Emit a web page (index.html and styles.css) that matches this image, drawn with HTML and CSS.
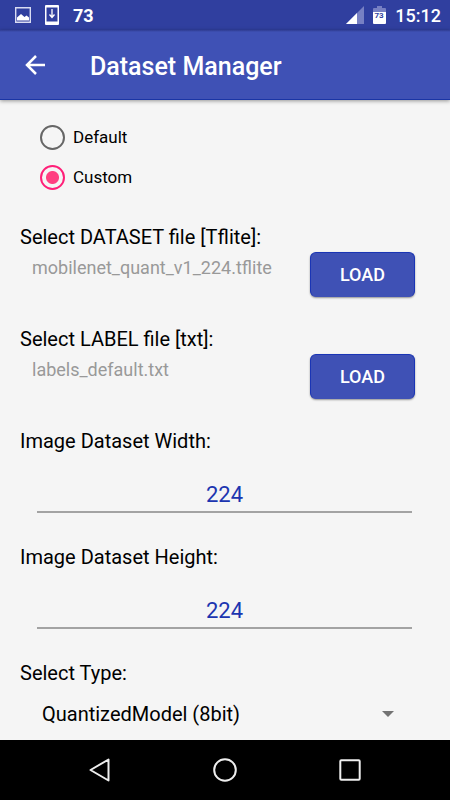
FILE: index.html
```html
<!DOCTYPE html>
<html lang="en">
<head>
<meta charset="utf-8">
<meta name="viewport" content="width=device-width, initial-scale=1">
<title>Dataset Manager</title>
<link rel="stylesheet" href="styles.css">
</head>
<body>
<div class="status">
  <div class="status-left">
    <svg width="16" height="16" viewBox="0 0 16 16" aria-hidden="true"><path d="M.7.7h14.6v14.6H.7z" fill="none" stroke="#d9dcf2" stroke-width="1.4"/><path d="M2 13.500V10.500l4-3.500 3.500 3 2-1.500L14 10.500v3z" fill="#fff"/></svg>
    <svg width="14" height="20" viewBox="0 0 14 20" aria-hidden="true"><path fill="#fff" fill-rule="evenodd" d="M1 0h12a1 1 0 0 1 1 1v18a1 1 0 0 1-1 1H1a1 1 0 0 1-1-1V1a1 1 0 0 1 1-1zM1.500 2.500v14h11v-14z"/><path d="M7 4v8M4.500 9.500 7 12.500l2.500-3" fill="none" stroke="#fff" stroke-width="1.300"/></svg>
    <span class="status-count">73</span>
  </div>
  <div class="status-right">
    <svg width="18" height="18" viewBox="0 0 18 18" aria-hidden="true"><path d="M18 0v18H0z" fill="#7780c3"/><path d="M11 7v11H0z" fill="#fff"/></svg>
    <svg width="13" height="18" viewBox="0 0 13 18" aria-hidden="true"><path d="M4 0h5v2h3a1 1 0 0 1 1 1v3H0V3a1 1 0 0 1 1-1h3z" fill="#7780c3"/><path d="M0 6h13v11a1 1 0 0 1-1 1H1a1 1 0 0 1-1-1z" fill="#fff"/><text x="6" y="12" class="battery-text">73</text></svg>
    <span class="clock">15:12</span>
  </div>
</div>
<header class="appbar">
  <button class="back" type="button" aria-label="Back"><svg width="20" height="20" viewBox="0 0 20 20"><path d="M20 10H2M11 1 2 10l9 9" fill="none" stroke="#fff" stroke-width="2.500"/></svg></button>
  <h1>Dataset Manager</h1>
</header>
<main>
  <div class="choices">
    <label class="choice"><input type="radio" name="source">Default</label>
    <label class="choice"><input type="radio" name="source" checked>Custom</label>
  </div>
  <section class="file">
    <h2>Select DATASET file [Tflite]:</h2>
    <div class="file-row"><span class="name">mobilenet_quant_v1_224.tflite</span><button class="load" type="button">LOAD</button></div>
  </section>
  <section class="file">
    <h2>Select LABEL file [txt]:</h2>
    <div class="file-row"><span class="name">labels_default.txt</span><button class="load" type="button">LOAD</button></div>
  </section>
  <div class="field">
    <label for="width">Image Dataset Width:</label>
    <input id="width" type="text" inputmode="numeric" value="224">
  </div>
  <div class="field">
    <label for="height">Image Dataset Height:</label>
    <input id="height" type="text" inputmode="numeric" value="224">
  </div>
  <div class="type">
    <label for="type">Select Type:</label>
    <div class="select">
      <select id="type"><option>QuantizedModel (8bit)</option></select>
      <svg width="12" height="6" viewBox="0 0 12 6" aria-hidden="true"><path d="M0 0h12L6 6z" fill="#737373"/></svg>
    </div>
  </div>
</main>
<nav>
  <button type="button" aria-label="Back"><svg width="24" height="24" viewBox="0 0 24 24"><path d="M20.500 1.500v21L2.500 12z"/></svg></button>
  <button type="button" aria-label="Home"><svg width="24" height="24" viewBox="0 0 24 24"><circle cx="12" cy="12" r="10.800"/></svg></button>
  <button type="button" aria-label="Recent apps"><svg width="24" height="24" viewBox="0 0 24 24"><rect x="2.300" y="2.300" width="19.400" height="19.400" rx="1"/></svg></button>
</nav>
</body>
</html>
```
FILE: styles.css
```css
* { box-sizing: border-box; }

body {
  margin: 0;
  min-height: 100vh;
  display: flex;
  flex-direction: column;
  background: #f5f5f5;
  color: #000;
  font-family: Roboto, "Liberation Sans", sans-serif;
}

svg { display: block; flex: none; }

button, input, select {
  font-family: inherit;
  margin: 0;
  padding: 0;
  border: 0;
  background: none;
}

.status {
  height: 30px;
  padding: 0 9px 0 15px;
  display: flex;
  justify-content: space-between;
  background: #303f9f;
  color: #fff;
}

.status-left, .status-right { display: flex; align-items: center; }
.status-left { gap: 14px; }
.status-right { gap: 9px; }
.status-count { font-size: 18px; font-weight: 700; }
.clock { font-size: 18px; font-weight: 500; }
.battery-text { font-size: 8px; font-weight: 700; text-anchor: middle; fill: #303f9f; }

.appbar {
  height: 70px;
  padding: 0 20px 0 25px;
  display: flex;
  align-items: center;
  gap: 45px;
  background: linear-gradient(#303c92, #3f51b5 2px);
  color: #fff;
  border-bottom: 1px solid #1a35a5;
  box-shadow: 0 1px 4px rgba(0, 0, 0, 0.4);
}

h1 { margin: 0; padding-top: 3px; font-size: 25px; font-weight: 500; }

main { flex: 1; padding: 17px 20px 6px; }

.choices { padding: 0 20px; margin-bottom: 28px; }

.choice {
  height: 40px;
  display: flex;
  align-items: center;
  gap: 8px;
  font-size: 17px;
}

.choice input {
  appearance: none;
  width: 25px;
  height: 25px;
  border: 2px solid #666;
  border-radius: 50%;
}

.choice input:checked {
  border-color: #ff1f78;
  background: radial-gradient(circle, #ff4081 6px, transparent 7px);
}

h2, .field label, .type label {
  display: block;
  margin: 0;
  font-size: 20px;
  font-weight: 400;
  line-height: 24px;
}

.file { margin-bottom: 30px; }

.file-row {
  padding: 3px 15px 0 12px;
  display: flex;
  justify-content: space-between;
}

.name { padding-top: 6px; font-size: 18px; line-height: 20px; color: #999; }

.load {
  width: 105px;
  height: 45px;
  border: 1px solid #1a35b5;
  border-bottom-color: #3f51b5;
  border-radius: 6px;
  background: #3f51b5;
  color: #fff;
  font-size: 18px;
  font-weight: 500;
  box-shadow: 0 1px 2px rgba(0, 0, 0, 0.4);
}

.field { margin-bottom: 32px; }

.field input {
  display: block;
  width: calc(100% - 35px);
  height: 36px;
  margin: 24px 17px 0;
  border-bottom: 2px solid #a3a3a3;
  color: #1c35b0;
  font-size: 22px;
  text-align: center;
}

.select {
  height: 40px;
  margin-top: 9px;
  padding: 0 36px 0 22px;
  display: flex;
  align-items: center;
}

select {
  appearance: none;
  flex: 1;
  height: 40px;
  color: #000;
  font-size: 20px;
}

nav {
  height: 60px;
  padding: 0 37px;
  display: flex;
  background: #000;
}

nav button {
  flex: 1;
  display: flex;
  align-items: center;
  justify-content: center;
}

nav svg { fill: none; stroke: #eee; stroke-width: 2; stroke-linejoin: round; }
```
